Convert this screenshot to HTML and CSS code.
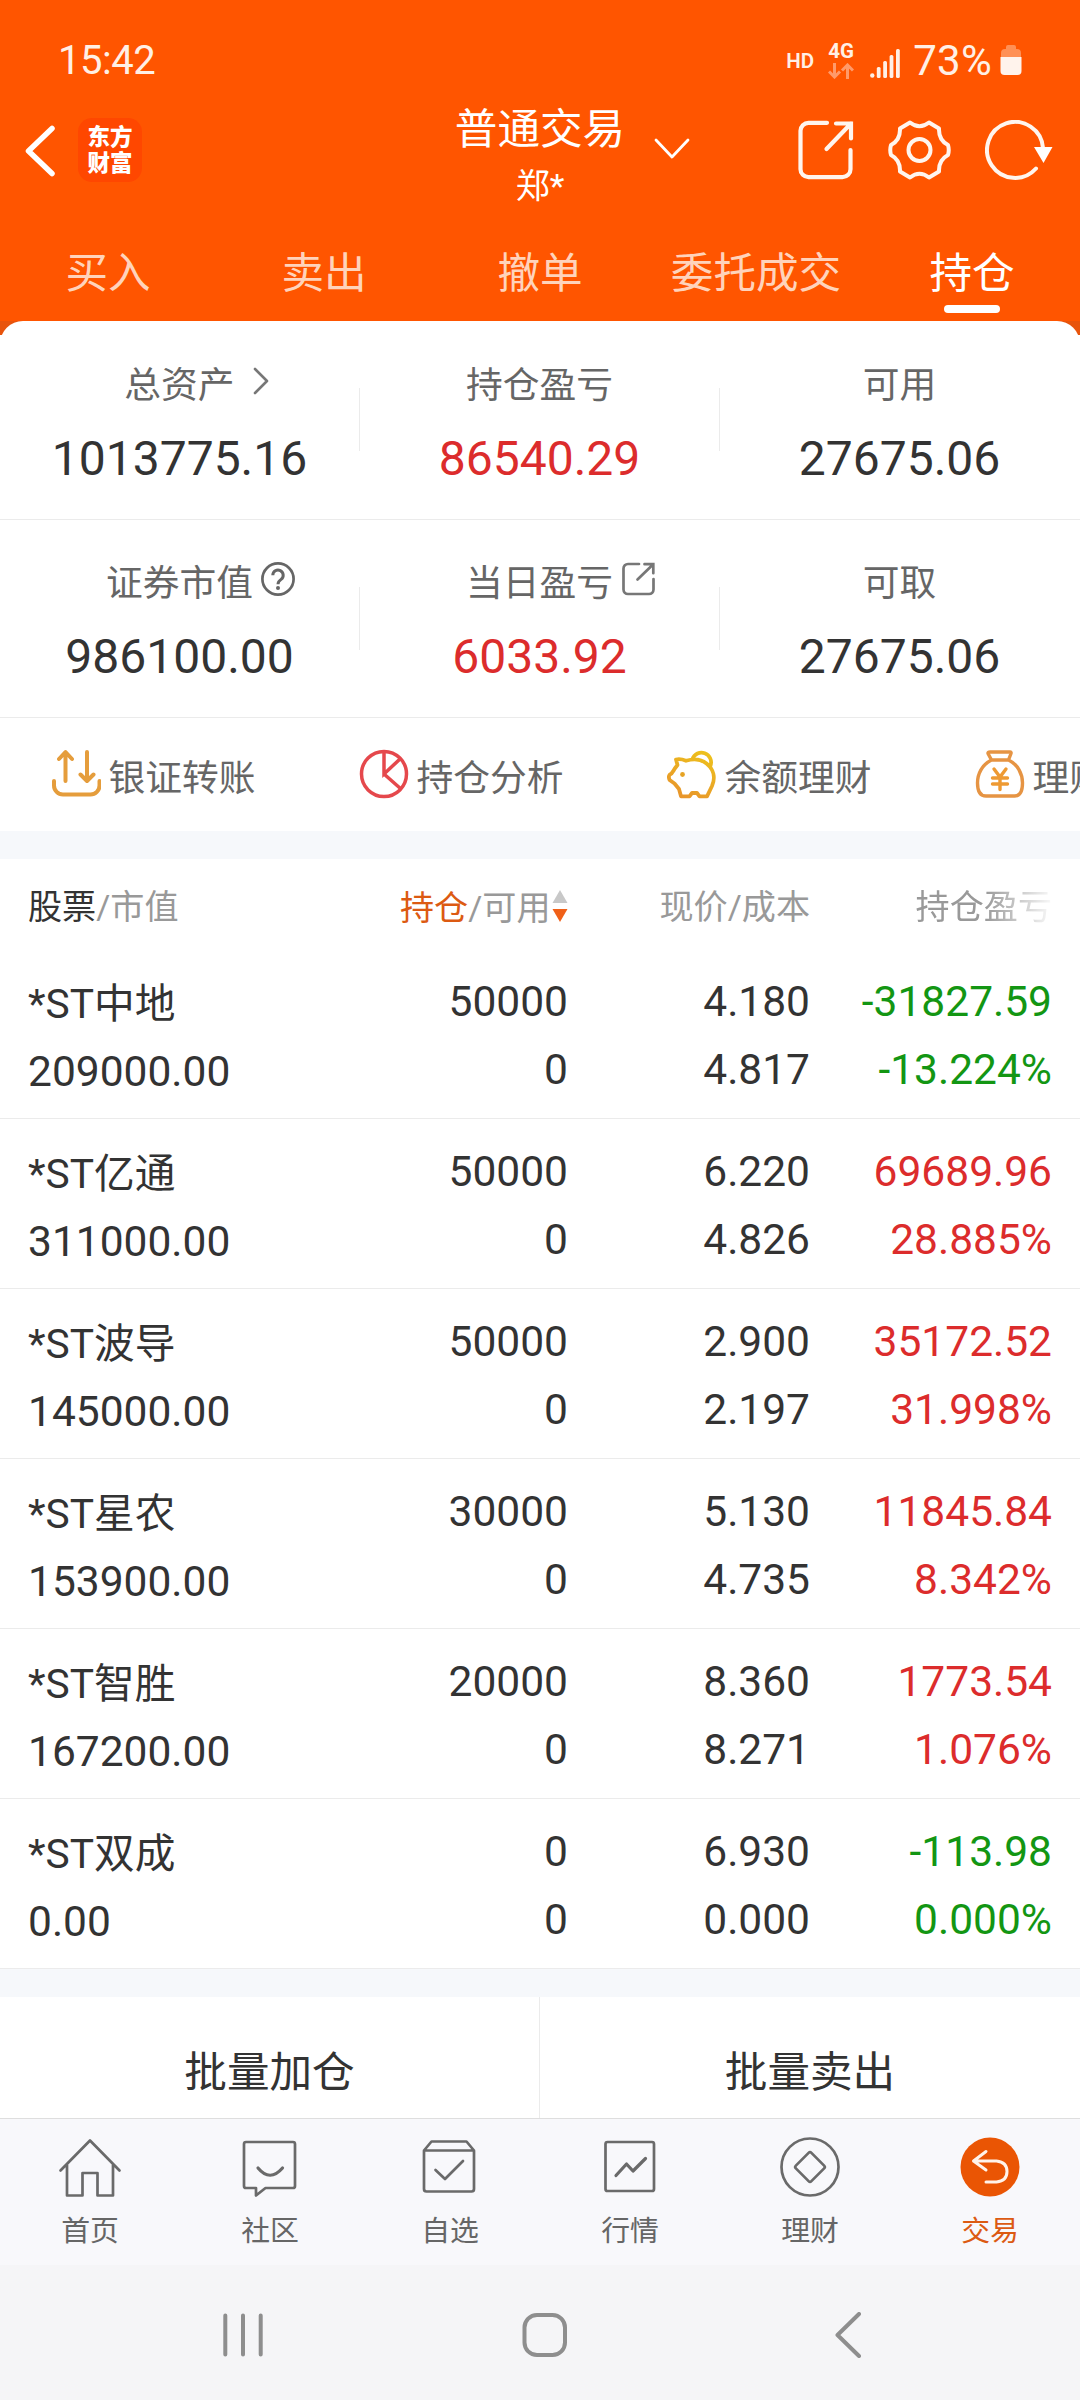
FILE: index.html
```html
<!DOCTYPE html>
<html lang="zh-CN">
<head>
<meta charset="utf-8">
<title>持仓</title>
<link rel="stylesheet" href="styles.css">
</head>
<body>
<div class="screen">
  <header class="header">
    <div class="status">
      <span class="time">15:42</span>
      <span class="hd">HD</span>
      <span class="net"><span class="net-type">4G</span>
        <svg width="26" height="16" viewBox="0 0 26 16" fill="none" stroke="#ff9a6a" stroke-width="3"><path d="M6.500 0V14M1 8.500l5.500 5.500L12 8.500M19.500 16V2M14 7.500L19.500 2 25 7.500"/></svg>
      </span>
      <svg class="signal" width="30" height="30" viewBox="0 0 30 30" fill="#fff0e6"><circle cx="2.300" cy="26.500" r="2.200"/><rect x="6.800" y="18" width="3.800" height="11" rx="1.500"/><rect x="13.200" y="12" width="3.800" height="17" rx="1.500"/><rect x="19.600" y="6" width="3.800" height="23" rx="1.500"/><rect x="26" y="0" width="3.800" height="29" rx="1.500"/></svg>
      <span class="percent">73%</span>
      <svg class="battery" width="22" height="32" viewBox="0 0 22 32"><path d="M6 3a2 2 0 0 1 2-2h6a2 2 0 0 1 2 2v2h1a4 4 0 0 1 4 4v4H1V9a4 4 0 0 1 4-4h1z" fill="#ff9055"/><path d="M.500 13h21v14a4 4 0 0 1-4 4h-13a4 4 0 0 1-4-4z" fill="#fff3ec"/></svg>
    </div>
    <div class="titlebar">
      <div class="title-left">
        <svg width="32" height="54" viewBox="0 0 32 54" fill="none" stroke="#fff" stroke-width="5.500" stroke-linecap="round" stroke-linejoin="round"><path d="M28 4.500L4.500 27 28 49.500"/></svg>
        <div class="logo"><span>东方</span><span>财富</span></div>
      </div>
      <div class="title-center">
        <div class="title">普通交易<svg class="caret" width="36" height="22" viewBox="0 0 36 22" fill="none" stroke="#fff" stroke-width="2.800" stroke-linecap="round" stroke-linejoin="round"><path d="M2 2l16 17L34 2"/></svg></div>
        <div class="account">郑*</div>
      </div>
      <div class="title-right">
        <svg width="56" height="60" viewBox="0 0 56 60" fill="none" stroke="#fff5ee" stroke-width="4.200" stroke-linecap="round"><path d="M29 2.800H10.500a8 8 0 0 0-8 8v38.400a8 8 0 0 0 8 8h34a8 8 0 0 0 8-8V30"/><path d="M38 3.500h15v15M53 3.500L28.500 29"/></svg>
        <svg width="63" height="60" viewBox="0 0 63 60" fill="none" stroke="#fff5ee" stroke-width="4" stroke-linejoin="round"><path d="M22 2.500Q31.500 10 41 2.500L51 8.500Q50.500 20 60 25Q61.500 30 60 35Q50.500 40 51 51.500L41 57.500Q31.500 50 22 57.500L12 51.500Q12.500 40 3 35Q1.500 30 3 25Q12.500 20 12 8.500Z"/><circle cx="31.500" cy="30" r="11"/></svg>
        <svg width="68" height="60" viewBox="0 0 68 60" fill="none" stroke="#fff5ee" stroke-width="4"><path d="M58 28A28 28 0 1 0 51 48.500" stroke-linecap="round"/><path d="M49 27h18.500L58.500 43z" fill="#fff" stroke="none"/></svg>
      </div>
    </div>
    <nav class="tabs">
      <span class="tab">买入</span><span class="tab">卖出</span><span class="tab">撤单</span><span class="tab">委托成交</span><span class="tab tab-on">持仓</span>
    </nav>
  </header>

  <main class="main">
    <section class="summary-wrap">
      <div class="summary">
        <div class="cell"><div class="label">总资产<svg class="i-chev" width="16" height="28" viewBox="0 0 16 28" fill="none" stroke="#777" stroke-width="2.600" stroke-linecap="round" stroke-linejoin="round"><path d="M2 2l12 12L2 26"/></svg></div><div class="value">1013775.16</div></div>
        <div class="cell"><div class="label">持仓盈亏</div><div class="value red">86540.29</div></div>
        <div class="cell"><div class="label">可用</div><div class="value">27675.06</div></div>
      </div>
      <div class="summary">
        <div class="cell"><div class="label">证券市值<svg class="i-box" width="34" height="34" viewBox="0 0 34 34" fill="none" stroke="#666" stroke-width="2.700"><circle cx="17" cy="17" r="15.600"/><path d="M11.800 13.200a5.200 5.200 0 1 1 8.300 4.200c-2.300 1.700-3.100 2.300-3.100 4.800" stroke-width="3"/><circle cx="17" cy="26" r="2" fill="#666" stroke="none"/></svg></div><div class="value">986100.00</div></div>
        <div class="cell"><div class="label">当日盈亏<svg class="i-share" width="33" height="34" viewBox="0 0 33 34" fill="none" stroke="#777" stroke-width="2.700" stroke-linecap="round"><path d="M17 2H6a4.500 4.500 0 0 0-4.500 4.500v21A4.500 4.500 0 0 0 6 32h21a4.500 4.500 0 0 0 4.500-4.500V17"/><path d="M22.500 2.200h8.800v9M31 2.500L15.500 17.500"/></svg></div><div class="value red">6033.92</div></div>
        <div class="cell"><div class="label">可取</div><div class="value">27675.06</div></div>
      </div>
      <div class="quick">
        <div class="q"><svg width="50" height="50" viewBox="0 0 50 50" fill="none" stroke="#e59d3c" stroke-width="4" stroke-linecap="round" stroke-linejoin="round"><path d="M14.500 32V4M8 10l6.500-7 6.500 7M36 3v28M29.500 25.500L36 32l6.500-6.500M3 32v4.500a9 9 0 0 0 9 9h27.500a9 9 0 0 0 9-9V32"/></svg>银证转账</div>
        <div class="q"><svg width="50" height="50" viewBox="0 0 50 50" fill="none" stroke="#e5484c" stroke-width="3.500"><circle cx="25" cy="25" r="22.500"/><path d="M25 3v22L41.500 9.500M25 25l17 15"/></svg>持仓分析</div>
        <div class="q"><svg width="50" height="50" viewBox="0 0 50 50" fill="none" stroke="url(#gold)" stroke-width="3.800" stroke-linecap="round" stroke-linejoin="round"><defs><linearGradient id="gold" x1="0.800" y1="0" x2="0.300" y2="1"><stop offset="0" stop-color="#edc01c"/><stop offset="1" stop-color="#e8962b"/></linearGradient></defs><path d="M9 10.500C13 9.500 16 10.500 19 11.800C26 9.500 34 10 39.500 14.500C47 20.500 48.500 29 45 37L40 47.300H32.500L30 44H25L22.500 47.300H14L12 40L7.500 34.500L2.600 31C1.700 29 1.700 27 2.600 25.800C5.500 24.500 6 22.500 7.800 19.500L10.500 16ZM25.500 10A9.500 9.500 0 1 1 43.500 16.500"/><circle cx="15.500" cy="25.500" r="2.400" fill="#e6a324" stroke="none"/></svg>余额理财</div>
        <div class="q"><svg width="50" height="50" viewBox="0 0 50 50" fill="none" stroke="#e69443" stroke-width="3.400" stroke-linecap="round" stroke-linejoin="round"><path d="M15 3h20q1.500 0 1 1.500L33.500 11h-17L13 4.500Q12.700 3 15 3zM16.500 11C7 15.500 2.500 25 2.500 34Q2.500 47 11 47h28.500q8 0 8-13C47.500 25 43 15.500 33.500 11"/><path d="M19 20l6 8 6-8M25 28v12.500M17.500 29h15M17.500 35h15" stroke="#ee9a33"/></svg>理财</div>
      </div>
    </section>

    <section class="holdings">
      <div class="thead">
        <span><b>股票</b>/市值</span>
        <span class="sorted"><b>持仓</b>/可用<svg width="16" height="32" viewBox="0 0 16 32"><path d="M8 0l7.500 13H.500z" fill="#c8c8c8"/><path d="M8 32l7.500-13H.500z" fill="#f06018"/></svg></span>
        <span>现价/成本</span>
        <span class="fade">持仓盈亏</span>
      </div>
      <div class="row"><div class="name"><p class="stock">*ST中地</p><p>209000.00</p></div><div><p>50000</p><p>0</p></div><div><p>4.180</p><p>4.817</p></div><div class="green"><p>-31827.59</p><p>-13.224%</p></div></div>
      <div class="row"><div class="name"><p class="stock">*ST亿通</p><p>311000.00</p></div><div><p>50000</p><p>0</p></div><div><p>6.220</p><p>4.826</p></div><div class="red"><p>69689.96</p><p>28.885%</p></div></div>
      <div class="row"><div class="name"><p class="stock">*ST波导</p><p>145000.00</p></div><div><p>50000</p><p>0</p></div><div><p>2.900</p><p>2.197</p></div><div class="red"><p>35172.52</p><p>31.998%</p></div></div>
      <div class="row"><div class="name"><p class="stock">*ST星农</p><p>153900.00</p></div><div><p>30000</p><p>0</p></div><div><p>5.130</p><p>4.735</p></div><div class="red"><p>11845.84</p><p>8.342%</p></div></div>
      <div class="row"><div class="name"><p class="stock">*ST智胜</p><p>167200.00</p></div><div><p>20000</p><p>0</p></div><div><p>8.360</p><p>8.271</p></div><div class="red"><p>1773.54</p><p>1.076%</p></div></div>
      <div class="row"><div class="name"><p class="stock">*ST双成</p><p>0.00</p></div><div><p>0</p><p>0</p></div><div><p>6.930</p><p>0.000</p></div><div class="green"><p>-113.98</p><p>0.000%</p></div></div>
    </section>

    <section class="batch"><span>批量加仓</span><span>批量卖出</span></section>
  </main>

  <nav class="bottom">
    <div class="item"><svg width="64" height="64" viewBox="0 0 64 64"><path d="M2.500 34.500L32 4.500l29.500 30M9 29v30.500h15.500V37h15v22.500H55V29"/></svg>首页</div>
    <div class="item"><svg width="64" height="64" viewBox="0 0 64 64"><path d="M8 6h47a2 2 0 0 1 2 2v42a2 2 0 0 1-2 2H27.500l-9.500 7.500V52H8a2 2 0 0 1-2-2V8a2 2 0 0 1 2-2z"/><path d="M20 32q12 14.500 24.500 0" stroke-width="3.200"/></svg>社区</div>
    <div class="item"><svg width="64" height="64" viewBox="0 0 64 64"><path d="M6 14.500h50V53a2.500 2.500 0 0 1-2.500 2.500h-45A2.500 2.500 0 0 1 6 53V14.500l7.500-9h35l7.500 9M17.500 34l9.500 9 18-18"/></svg>自选</div>
    <div class="item"><svg width="64" height="64" viewBox="0 0 64 64"><rect x="7.500" y="6" width="48.500" height="49" rx="2"/><path d="M18 39.500l10.500-11.500 6.500 7L47.500 22.500" stroke-width="3.200"/></svg>行情</div>
    <div class="item"><svg width="64" height="64" viewBox="0 0 64 64"><circle cx="32" cy="31" r="28.500"/><rect x="21" y="20" width="22" height="22" rx="2" transform="rotate(45 32 31)"/></svg>理财</div>
    <div class="item item-on"><svg width="64" height="64" viewBox="0 0 64 64"><circle cx="32" cy="31" r="29.500" fill="#ea5504" stroke="none"/><path d="M28 15.500L15.500 25 28 34M16 25h22.500q10.500 1 10.500 10.500t-10.500 10.500H28" stroke="#fff3ea" stroke-width="3"/></svg>交易</div>
  </nav>
  <div class="sysnav">
    <svg width="40" height="46" viewBox="0 0 40 46"><path d="M2.300 3.500v39M20 3.500v39M37.700 3.500v39"/></svg>
    <svg width="46" height="46" viewBox="0 0 46 46"><rect x="2.500" y="3" width="40.500" height="40" rx="12.500"/></svg>
    <svg width="30" height="46" viewBox="0 0 30 46"><path d="M26 2L4.500 23 26 44"/></svg>
  </div>
</div>
</body>
</html>
```
FILE: styles.css
```css
* { box-sizing: border-box; margin: 0; padding: 0; }
body {
  width: 1080px;
  height: 2400px;
  overflow: hidden;
  background: #fff;
  color: #333;
  font-family: Roboto, "Noto Sans CJK SC", sans-serif;
}
svg { display: block; flex: none; }
.screen { display: flex; flex-direction: column; width: 1080px; height: 2400px; }

/* header */
.header { flex: none; height: 321px; background: #f50; color: #fff; }
.status {
  display: flex;
  align-items: flex-start;
  height: 100px;
  padding: 0 58px 0 58px;
  color: #fff0e6;
}
.time { flex: 1; padding-top: 37px; font-size: 40px; line-height: 48px; letter-spacing: -0.5px; }
.hd { padding-top: 49px; font-size: 20.5px; line-height: 24px; font-weight: 600; margin-right: 14px; }
.net { display: flex; flex-direction: column; gap: 5px; width: 27px; margin-right: 15px; padding-top: 41px; }
.net-type { font-size: 20.5px; line-height: 20px; font-weight: 700; height: 17px; }
.signal { margin-top: 49px; margin-right: 13px; }
.percent { padding-top: 36px; font-size: 42px; line-height: 49px; margin-right: 8px; letter-spacing: 0.3px; }
.battery { margin-top: 44px; }

.titlebar { display: grid; grid-template-columns: 1fr 400px 1fr; height: 122px; }
.title-left { display: flex; align-items: flex-start; gap: 22px; padding: 18px 0 0 24px; }
.title-left svg { margin-top: 6px; }
.logo {
  display: flex;
  flex-direction: column;
  align-items: center;
  justify-content: center;
  width: 64px;
  height: 64px;
  border-radius: 14px;
  background: #ff4700;
  font-size: 22.5px;
  line-height: 26px;
  font-weight: 800;
}
.title-center { display: flex; flex-direction: column; align-items: center; }
.title { display: flex; align-items: center; height: 56px; padding-top: 2px; font-size: 42.6px; line-height: 56px; }
.caret { margin: 40px -65px 0 29px; }
.account { font-size: 34px; line-height: 44px; margin-top: 8px; }
.title-right { display: flex; justify-content: flex-end; gap: 34px; padding: 20px 27px 0 0; }

.tabs { display: grid; grid-template-columns: repeat(5, 1fr); height: 99px; }
.tab {
  display: flex;
  flex-direction: column;
  align-items: center;
  padding-top: 23px;
  font-size: 42.6px;
  line-height: 56px;
  color: #ffd3bb;
  white-space: nowrap;
}
.tab-on { color: #fff; }
.tab-on::after { content: ""; width: 56px; height: 8px; margin-top: 4px; border-radius: 4px; background: #fff; }

/* account summary */
.main { flex: none; height: 1797px; overflow: hidden; }
.summary-wrap { background: linear-gradient(#e8540c 14px, #fff 14px); }
.summary { display: grid; grid-template-columns: repeat(3, 1fr); height: 198px; border-bottom: 1px solid #ebebeb; background: #fff; }
.summary:first-child { height: 199px; border-radius: 23px 23px 0 0; }
.cell {
  display: flex;
  flex-direction: column;
  align-items: center;
  padding: 39px 1px 0 0;
  background: linear-gradient(#ebebeb, #ebebeb) no-repeat right 67px / 1px 63px;
}
.summary:first-child .cell { padding-top: 40px; }
.cell:last-child { background: none; }
.label { display: flex; align-items: center; font-size: 36.75px; line-height: 50px; color: #666; }
.value { margin-top: 18px; font-size: 48px; line-height: 60px; }
.i-chev { margin: -10px -34px 0 18px; }
.i-box { margin: -10px -42px 0 8px; }
.i-share { margin: -10px -42px 0 9px; }
.red { color: #dc2c2c; }
.green { color: #139613; }

.quick { display: flex; height: 113px; overflow: hidden; padding-left: 51px; }
.q {
  flex: none;
  display: flex;
  align-items: center;
  gap: 7.5px;
  width: 308px;
  height: 114px;
  font-size: 36.75px;
  line-height: 50px;
  padding-top: 8px;
  color: #666;
  white-space: nowrap;
}
.q svg { margin-top: -10px; }

/* holdings */
.holdings { border-top: 28px solid #f6f8fb; border-bottom: 28px solid #f6f8fb; }
.thead, .row { display: grid; grid-template-columns: 298px 242px 242px 242px; padding-left: 28px; }
.thead { height: 90px; padding-top: 7px; font-size: 34.125px; line-height: 82px; color: #999; }
.thead b { font-weight: 400; color: #333; }
.thead > span { text-align: right; }
.thead > span:first-child { text-align: left; }
.thead .sorted { display: flex; justify-content: flex-end; align-items: center; }
.sorted b { color: #dc5a12; }
.sorted svg { margin: -3px 0 0 1.5px; }
.thead .fade { -webkit-mask-image: linear-gradient(90deg, #000 175px, transparent 246px); mask-image: linear-gradient(90deg, #000 175px, transparent 246px); }
.row { height: 170px; padding-top: 19px; border-bottom: 1px solid #ebebeb; font-size: 42.5px; line-height: 68px; text-align: right; }
.row .name { text-align: left; padding-top: 2px; }
.stock { font-size: 40.7px; }

.batch { display: grid; grid-template-columns: 1fr 1fr; height: 148px; font-size: 42.6px; line-height: 151px; text-align: center; }
.batch span:first-child { border-right: 1px solid #ebebeb; }

/* bottom navigation */
.bottom {
  display: grid;
  grid-template-columns: repeat(6, 1fr);
  flex: none;
  height: 147px;
  padding-top: 17px;
  border-top: 1px solid #dedede;
  background: #f8f8fb;
}
.item { display: flex; flex-direction: column; align-items: center; font-size: 28.875px; line-height: 36px; color: #666; }
.item svg { margin-bottom: 13px; fill: none; stroke: #6a6a6a; stroke-width: 2.7; stroke-linecap: round; stroke-linejoin: round; }
.item-on { color: #dc5a12; }
.sysnav { display: flex; flex: 1; gap: 259px; padding: 47px 0 0 223px; background: #f5f5f7; }
.sysnav svg { fill: none; stroke: #8e8e8e; stroke-width: 4; stroke-linecap: round; stroke-linejoin: round; }
.sysnav svg:last-child { margin-left: 6px; }
```
